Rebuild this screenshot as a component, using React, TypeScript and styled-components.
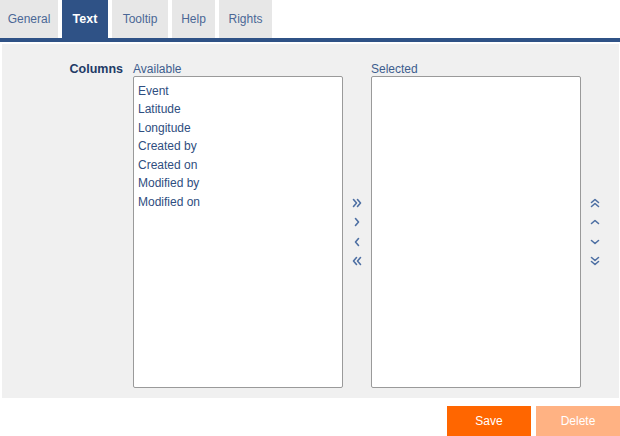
import React from "react";
import styled, { createGlobalStyle } from "styled-components";

const Global = createGlobalStyle`
  html, body { margin: 0; padding: 0; background: #ffffff; }
  body { font-family: "Liberation Sans", Arial, sans-serif; font-size: 12px; }
`;

const Page = styled.div`
  width: 620px;
  height: 436px;
  overflow: hidden;
  display: flex;
  flex-direction: column;
`;

const TabBar = styled.div`
  display: flex;
  gap: 4px;
  height: 38px;
  border-bottom: 4px solid #2f5286;
`;

const Tab = styled.div<{ $active?: boolean; $width: number }>`
  display: flex;
  align-items: center;
  justify-content: center;
  width: ${(p) => p.$width}px;
  background: ${(p) => (p.$active ? "#2f5286" : "#e7e7e7")};
  color: ${(p) => (p.$active ? "#ffffff" : "#4b6796")};
  font-weight: ${(p) => (p.$active ? "bold" : "normal")};
  font-size: ${(p) => (p.$active ? "12.5px" : "12px")};
`;

const Panel = styled.div`
  margin: 2px 1px 0 2px;
  height: 355px;
  background: #f0f0f0;
  padding-top: 18px;
  box-sizing: border-box;
  display: grid;
  grid-template-columns: 131px 210px 28px 210px 28px;
  grid-template-rows: 14px 312px;
  align-content: start;
`;

const FieldLabel = styled.div`
  text-align: right;
  padding-right: 10px;
  font-weight: bold;
  font-size: 12.5px;
  color: #1e3a66;
  line-height: 14px;
`;

const ListTitle = styled.div<{ $col: number }>`
  grid-column: ${(p) => p.$col};
  color: #3d5d8e;
  line-height: 14px;
`;

const ListBox = styled.div<{ $col: number }>`
  grid-column: ${(p) => p.$col};
  grid-row: 2;
  background: #ffffff;
  border: 1px solid #9a9a9a;
  border-radius: 2px;
  box-sizing: border-box;
  padding: 5px 4px;
  display: flex;
  flex-direction: column;
`;

const Item = styled.div`
  color: #2f4e80;
  line-height: 18.5px;
  white-space: nowrap;
`;

const ArrowColumn = styled.div<{ $col: number }>`
  grid-column: ${(p) => p.$col};
  grid-row: 2;
  display: flex;
  flex-direction: column;
  align-items: center;
  justify-content: center;
`;

const ArrowButton = styled.div`
  width: 20px;
  height: 19.3px;
  display: flex;
  align-items: center;
  justify-content: center;
  color: #4d6fa3;
`;

const Footer = styled.div`
  display: flex;
  justify-content: flex-end;
  gap: 5px;
  padding-top: 8px;
`;

const Button = styled.div<{ $disabled?: boolean }>`
  width: 84px;
  height: 30px;
  display: flex;
  align-items: center;
  justify-content: center;
  background: ${(p) => (p.$disabled ? "#ffb283" : "#ff6600")};
  color: #ffffff;
  font-size: 12px;
`;

type Dir = "right2" | "right" | "left" | "left2" | "up2" | "up" | "down" | "down2";

const chevron = (dir: Dir) => {
  switch (dir) {
    case "right":
      return <polyline points="3.5,1.5 6.5,5 3.5,8.5" />;
    case "left":
      return <polyline points="6.5,1.5 3.5,5 6.5,8.5" />;
    case "right2":
      return (
        <>
          <polyline points="1.5,1.5 4.5,5 1.5,8.5" />
          <polyline points="5.5,1.5 8.5,5 5.5,8.5" />
        </>
      );
    case "left2":
      return (
        <>
          <polyline points="4.5,1.5 1.5,5 4.5,8.5" />
          <polyline points="8.5,1.5 5.5,5 8.5,8.5" />
        </>
      );
    case "up":
      return <polyline points="1.5,6.5 5,3.5 8.5,6.5" />;
    case "down":
      return <polyline points="1.5,3.5 5,6.5 8.5,3.5" />;
    case "up2":
      return (
        <>
          <polyline points="1.5,4.5 5,1.5 8.5,4.5" />
          <polyline points="1.5,8.5 5,5.5 8.5,8.5" />
        </>
      );
    case "down2":
      return (
        <>
          <polyline points="1.5,1.5 5,4.5 8.5,1.5" />
          <polyline points="1.5,5.5 5,8.5 8.5,5.5" />
        </>
      );
  }
};

const Arrow = ({ dir }: { dir: Dir }) => (
  <ArrowButton>
    <svg width="10" height="10" viewBox="0 0 10 10" fill="none" stroke="currentColor" strokeWidth="1.6" strokeLinecap="round" strokeLinejoin="round">
      {chevron(dir)}
    </svg>
  </ArrowButton>
);

const tabs: { label: string; width: number }[] = [
  { label: "General", width: 58 },
  { label: "Text", width: 46 },
  { label: "Tooltip", width: 56 },
  { label: "Help", width: 43 },
  { label: "Rights", width: 53 },
];
const available = ["Event", "Latitude", "Longitude", "Created by", "Created on", "Modified by", "Modified on"];

export default function App() {
  return (
    <Page>
      <Global />
      <TabBar>
        {tabs.map((t) => (
          <Tab key={t.label} $width={t.width} $active={t.label === "Text"}>
            {t.label}
          </Tab>
        ))}
      </TabBar>
      <Panel>
        <FieldLabel>Columns</FieldLabel>
        <ListTitle $col={2}>Available</ListTitle>
        <ListTitle $col={4}>Selected</ListTitle>
        <ListBox $col={2}>
          {available.map((a) => (
            <Item key={a}>{a}</Item>
          ))}
        </ListBox>
        <ArrowColumn $col={3}>
          <Arrow dir="right2" />
          <Arrow dir="right" />
          <Arrow dir="left" />
          <Arrow dir="left2" />
        </ArrowColumn>
        <ListBox $col={4} />
        <ArrowColumn $col={5}>
          <Arrow dir="up2" />
          <Arrow dir="up" />
          <Arrow dir="down" />
          <Arrow dir="down2" />
        </ArrowColumn>
      </Panel>
      <Footer>
        <Button>Save</Button>
        <Button $disabled>Delete</Button>
      </Footer>
    </Page>
  );
}
